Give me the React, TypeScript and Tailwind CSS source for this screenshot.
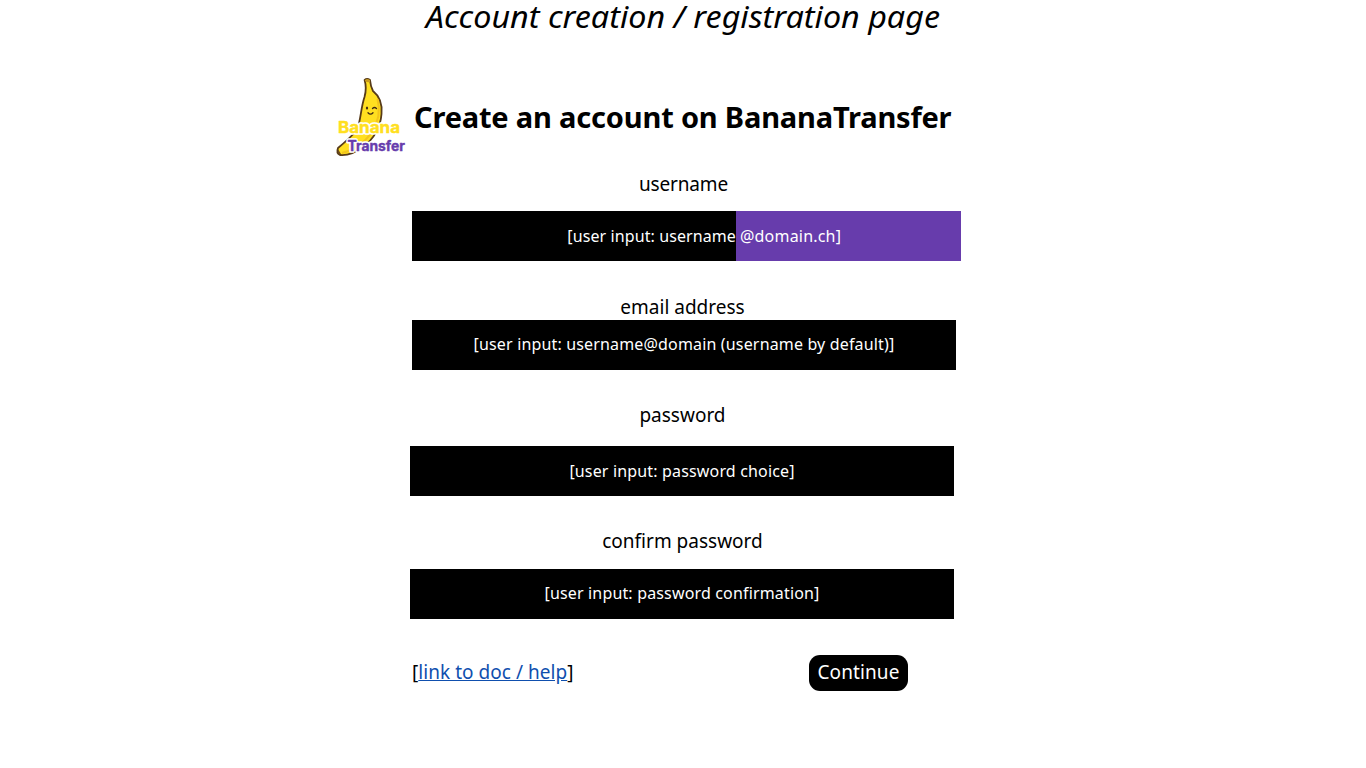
const wordmark = [
  { text: "Banana", x: 338, y: 133, size: 15.8, width: 62, fill: "#ffdf20" },
  { text: "Transfer", x: 347.5, y: 150.5, size: 14, width: 57.5, fill: "#673cac" },
];

function Logo() {
  return (
    <svg width="76" height="84" viewBox="333 75 76 84" role="img" aria-label="Banana Transfer" className="shrink-0">
      <path
        d="M364.6 80 Q367 78 370 80 Q370.5 86 373 91 Q383 99 381.5 114 Q380 134 363 147 Q351 156 340 155 Q336 153 338 148 Q350 138 357 130 C361 120 360.5 109 364.5 97 Q367 88 364.6 80Z"
        fill="#ffdf20"
        stroke="#573b18"
        strokeWidth="1.8"
        strokeLinejoin="round"
      />
      <path d="M377.5 99 Q382 116 372 132 Q360 149 342 153" fill="none" stroke="#f3c51b" strokeWidth="2" />
      <path d="M365 80 Q367 78 370 80 L370 82 Q367 83 365 81Z" fill="#c79a1e" />
      <path d="M338 149 L341 154 Q337 155 338 149Z" fill="#6c4a18" />
      <ellipse cx="367" cy="108" rx="1.1" ry="1.5" fill="#402a14" />
      <path d="M372.5 108.5 Q374.5 106.5 376.5 108.5 M368 112.8 Q370.5 115.6 373 112.8" fill="none" stroke="#402a14" strokeWidth="1.3" strokeLinecap="round" />
      <g className="font-['Inter',sans-serif] font-bold" strokeLinejoin="round">
        {wordmark.map((w) => (
          <text key={w.text} x={w.x} y={w.y} fontSize={w.size} textLength={w.width} lengthAdjust="spacingAndGlyphs" fill="#fff" stroke="#fff" strokeWidth="3.4" aria-hidden="true">
            {w.text}
          </text>
        ))}
        {wordmark.map((w) => (
          <text key={w.text} x={w.x} y={w.y} fontSize={w.size} textLength={w.width} lengthAdjust="spacingAndGlyphs" fill={w.fill} stroke={w.fill} strokeWidth="0.4">
            {w.text}
          </text>
        ))}
      </g>
    </svg>
  );
}

const label = "flex h-7 items-center justify-center text-[19px] whitespace-nowrap";
const field = "flex items-center justify-center bg-black text-[16px] tracking-[0.16px] text-white whitespace-nowrap";

export default function App() {
  return (
    <main className="flex h-[768px] w-full flex-col overflow-hidden bg-white font-['Noto_Sans',sans-serif] text-black">
      <div className="flex h-[36px] items-start justify-center">
        <p className="scale-x-[1.076] whitespace-nowrap text-[30px] leading-[34px] font-normal italic">Account creation / registration page</p>
      </div>
      <header className="mt-[39px] ml-[333px] flex h-[84px] items-center">
        <Logo />
        <h1 className="ml-[5px] whitespace-nowrap text-[29px] font-bold tracking-[-0.18px]">Create an account on BananaTransfer</h1>
      </header>
      <form className="ml-[410px] flex w-[552px] flex-col">
        <div className="mt-[11px] flex w-[547px] justify-center"><label className={`${label} tracking-[-0.15px]`}>username</label></div>
        <div className="mt-[13px] ml-[2px] flex h-[50px] w-[549px] items-center whitespace-nowrap text-[16px] tracking-[0.1px] text-white">
          <div className="flex h-full w-[324px] items-center justify-end bg-black">[user input: username</div>
          <div className="flex h-full w-[225px] items-center bg-[#673cac] pl-[4px] tracking-[0.2px]">@domain.ch]</div>
        </div>
        <div className="mt-[32px] flex w-[545px] justify-center"><label className={label}>email address</label></div>
        <div className={`${field} mt-[-1px] ml-[2px] h-[50px] w-[544px] pb-[2px]`}>[user input: username@domain (username by default)]</div>
        <div className="mt-[31px] flex w-[545px] justify-center"><label className={label}>password</label></div>
        <div className={`${field} mt-[17px] h-[50px] w-[544px]`}>[user input: password choice]</div>
        <div className="mt-[31px] flex w-[545px] justify-center"><label className={label}>confirm password</label></div>
        <div className={`${field} mt-[14px] h-[50px] w-[544px] pb-[2px]`}>[user input: password confirmation]</div>
        <footer className="mt-[36px] flex h-[36px] items-center justify-between pl-[2px] text-[19px]">
          <span className="pb-[2px] whitespace-nowrap tracking-[0.04px]">[<a href="#help" className="text-[#0f4fae] underline">link to doc / help</a>]</span>
          <button type="button" className="mr-[54px] h-[36px] w-[99px] rounded-[11px] bg-black pb-[2px] text-[19px] tracking-[0.1px] text-white">Continue</button>
        </footer>
      </form>
    </main>
  );
}
